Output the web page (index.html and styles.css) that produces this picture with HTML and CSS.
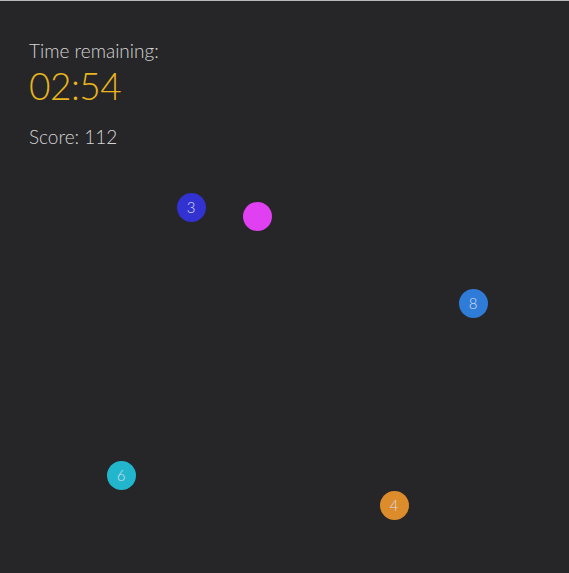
FILE: index.html
```html
<!DOCTYPE html>
<html>
<head>
<meta charset="utf-8">
<link rel="stylesheet" href="styles.css">
</head>
<body>
<div class="game">
  <div class="hud">
    <div class="label">Time remaining:</div>
    <div class="timer">02:54</div>
    <div class="score">Score: 112</div>
  </div>
  <div class="ball b3" style="left:191px;top:206px">3</div>
  <div class="ball player" style="left:257px;top:215.5px"></div>
  <div class="ball b8" style="left:473px;top:302px">8</div>
  <div class="ball b6" style="left:121px;top:474px">6</div>
  <div class="ball b4" style="left:394px;top:504px">4</div>
</div>
</body>
</html>
```
FILE: styles.css
```css
html, body {
  margin: 0;
  padding: 0;
  background: #262628;
}
.game {
  position: relative;
  width: 569px;
  height: 573px;
  box-sizing: border-box;
  border-top: 1px solid #b9b9b9;
  background: #262628;
  overflow: hidden;
  font-family: Lato, "Noto Sans", sans-serif;
  font-weight: 300;
}
.hud {
  padding: 38px 0 0 29px;
  color: #d4d4d4;
}
.label {
  font-size: 19px;
  line-height: 24px;
}
.timer {
  font-size: 37px;
  line-height: 46px;
  color: #e8b51e;
  letter-spacing: -0.5px;
}
.score {
  font-size: 19px;
  line-height: 24px;
  margin-top: 16px;
}
.ball {
  position: absolute;
  width: 29px;
  height: 29px;
  margin: -14.5px 0 0 -14.5px;
  border-radius: 50%;
  color: #d6dcf2;
  font-size: 15px;
  line-height: 29px;
  text-align: center;
}
.b3 { background: #3232d2; }
.player { background: #e03ff2; }
.b8 { background: #2f7bd8; }
.b6 { background: #22b6cc; }
.b4 { background: #dd8c2b; }
```
